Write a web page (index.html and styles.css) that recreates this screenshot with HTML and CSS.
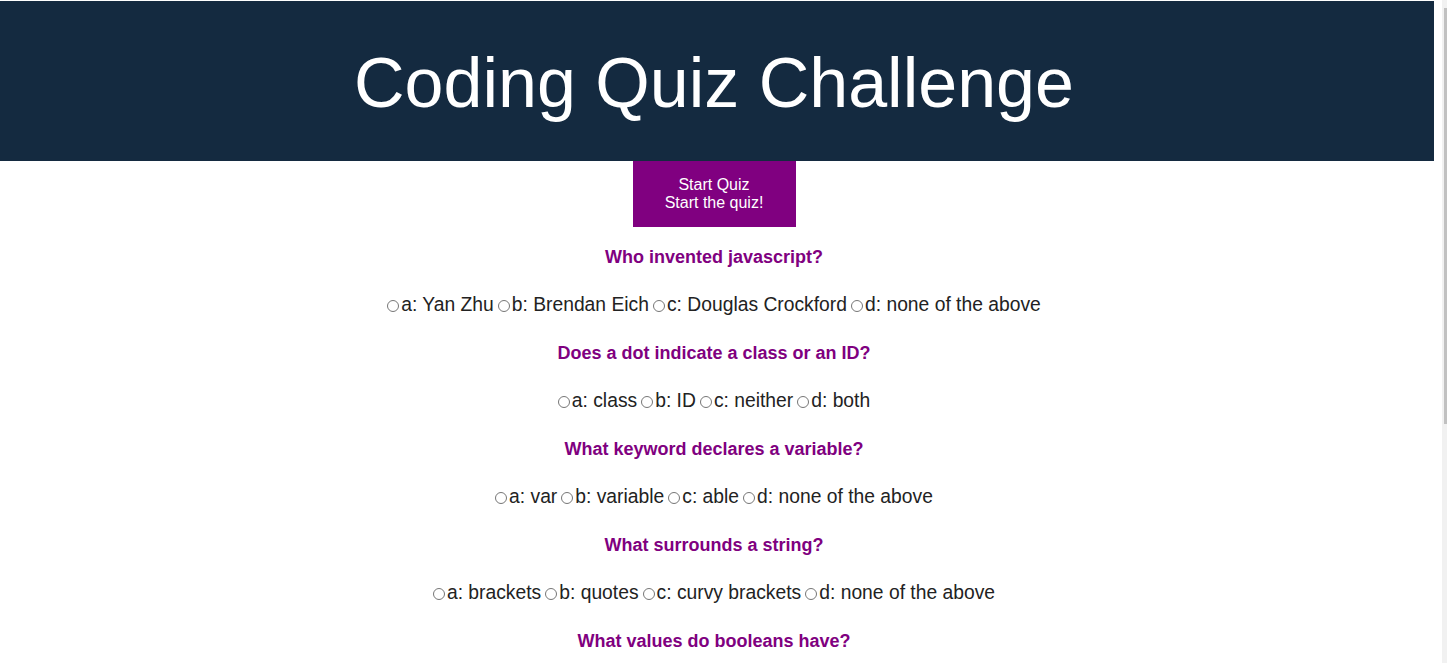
FILE: index.html
```html
<!DOCTYPE html>
<html lang="en">
<head>
<meta charset="utf-8">
<title>Coding Quiz Challenge</title>
<link rel="stylesheet" href="styles.css">
</head>
<body>
<div class="page">
  <header class="masthead">
    <h1 class="title">Coding Quiz Challenge</h1>
  </header>
  <main class="content">
    <button class="start-btn" type="button">Start Quiz<br>Start the quiz!</button>
    <section class="quiz">
      <h2 class="question">Who invented javascript?</h2>
      <div class="options">
        <label><input type="radio" name="q1">a: Yan Zhu</label>
        <label><input type="radio" name="q1">b: Brendan Eich</label>
        <label><input type="radio" name="q1">c: Douglas Crockford</label>
        <label><input type="radio" name="q1">d: none of the above</label>
      </div>
      <h2 class="question">Does a dot indicate a class or an ID?</h2>
      <div class="options">
        <label><input type="radio" name="q2">a: class</label>
        <label><input type="radio" name="q2">b: ID</label>
        <label><input type="radio" name="q2">c: neither</label>
        <label><input type="radio" name="q2">d: both</label>
      </div>
      <h2 class="question">What keyword declares a variable?</h2>
      <div class="options">
        <label><input type="radio" name="q3">a: var</label>
        <label><input type="radio" name="q3">b: variable</label>
        <label><input type="radio" name="q3">c: able</label>
        <label><input type="radio" name="q3">d: none of the above</label>
      </div>
      <h2 class="question">What surrounds a string?</h2>
      <div class="options">
        <label><input type="radio" name="q4">a: brackets</label>
        <label><input type="radio" name="q4">b: quotes</label>
        <label><input type="radio" name="q4">c: curvy brackets</label>
        <label><input type="radio" name="q4">d: none of the above</label>
      </div>
      <h2 class="question">What values do booleans have?</h2>
      <div class="options">
        <label><input type="radio" name="q5">a: true or false</label>
        <label><input type="radio" name="q5">b: yes or no</label>
        <label><input type="radio" name="q5">c: 1 or 2</label>
        <label><input type="radio" name="q5">d: none of the above</label>
      </div>
    </section>
  </main>
</div>
<div class="scrollbar"><div class="scrollbar-thumb"></div></div>
</body>
</html>
```

FILE: styles.css
```css
html, body {
  margin: 0;
  padding: 0;
  height: 100%;
  overflow: hidden;
  background: #ffffff;
}

.page {
  width: 1434px;
  padding-top: 1px;
  font-family: "Liberation Sans", Arial, sans-serif;
}

.masthead {
  height: 160px;
  background: #142a40;
  display: flex;
  align-items: center;
  justify-content: center;
  padding-right: 6px;
}

.title {
  margin: 0;
  color: #ffffff;
  font-family: "Liberation Sans", Arial, sans-serif;
  font-weight: normal;
  font-size: 70px;
  line-height: 80px;
  padding-top: 3px;
}

.content {
  display: flex;
  flex-direction: column;
  align-items: center;
  padding-right: 6px;
}

.start-btn {
  width: 163px;
  height: 66px;
  border: none;
  background: #800080;
  color: #ffffff;
  font-family: "Liberation Sans", Arial, sans-serif;
  font-size: 16px;
  line-height: 18px;
  padding: 0;
  cursor: pointer;
}

.quiz {
  display: flex;
  flex-direction: column;
  align-items: center;
  padding-top: 6px;
}

.question {
  margin: 0;
  height: 48px;
  line-height: 48px;
  color: #800080;
  font-size: 18px;
  font-weight: bold;
}

.options {
  height: 48px;
  line-height: 48px;
  color: #222222;
  font-size: 19.3px;
  display: flex;
  gap: 4px;
}

.options label {
  display: flex;
  align-items: center;
}

.options input {
  margin: 1px 2px 0 0;
  width: 12px;
  height: 12px;
}

.scrollbar {
  position: fixed;
  top: 0;
  right: 0;
  width: 5px;
  height: 100%;
  background: #f1f1f1;
}

.scrollbar-thumb {
  position: absolute;
  top: 8px;
  left: 2px;
  width: 3px;
  height: 416px;
  background: #c1c1c1;
}
```
